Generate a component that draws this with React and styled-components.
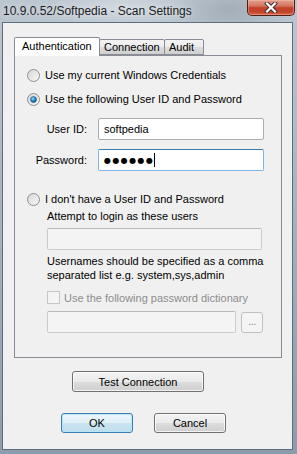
import React from "react";
import styled, { createGlobalStyle } from "styled-components";

const Global = createGlobalStyle`
  html, body { margin: 0; padding: 0; }
  body { width: 297px; height: 454px; overflow: hidden; font-family: "Liberation Sans", Arial, sans-serif; }
  * { box-sizing: border-box; }
`;

const Window = styled.div`
  width: 297px;
  height: 454px;
  display: flex;
  flex-direction: column;
  background:
    radial-gradient(ellipse 60px 30px at 230px 10px, rgba(120,130,140,0.35), transparent),
    radial-gradient(ellipse 80px 20px at 120px 8px, rgba(230,235,240,0.5), transparent),
    linear-gradient(180deg, #bcc6cf 0%, #a9b6c1 40%, #8d9caa 100%);
`;

const TitleBar = styled.div`
  height: 22px;
  flex: none;
  display: flex;
  justify-content: space-between;
  align-items: flex-start;
`;

const Title = styled.div`
  padding: 4px 0 0 3px;
  font-family: "Liberation Sans", Arial, sans-serif;
  font-size: 12px;
  color: #1b1b22;
  text-shadow: 0 0 6px rgba(255,255,255,0.8);
  white-space: nowrap;
`;

const CloseBtn = styled.div`
  width: 48px;
  height: 16px;
  margin-right: 2px;
  border: 1px solid #4e1f18;
  border-top: none;
  border-radius: 0 0 5px 5px;
  background: linear-gradient(180deg, #e2a08f 0%, #d47560 40%, #c1402a 52%, #c44529 80%, #d8694a 100%);
  box-shadow: inset 0 0 0 1px rgba(255,200,185,0.4);
  display: flex;
  align-items: center;
  justify-content: center;
`;

const Client = styled.div`
  flex: 1;
  margin: 0 4px 4px 2px;
  border: 1px solid #5f6d7a;
  background: #f0f0f0;
  display: flex;
  flex-direction: column;
  padding: 13px 10px 0 11px;
`;

const TabStrip = styled.div`
  display: flex;
  align-items: flex-end;
  height: 19px;
  position: relative;
  z-index: 1;
`;

const Tab = styled.div`
  height: ${p => (p.$active ? "19px" : "16px")};
  width: ${p => p.$w}px;
  margin-left: ${p => (p.$first ? 0 : -1)}px;
  margin-bottom: ${p => (p.$active ? "-1px" : "0")};
  border: 1px solid #898c95;
  border-bottom: ${p => (p.$active ? "none" : "1px solid #898c95")};
  border-radius: 2px 2px 0 0;
  background: ${p => (p.$active ? "#ffffff" : "linear-gradient(180deg, #f3f3f3 0%, #ebebeb 50%, #dddddd 51%, #cfcfcf 100%)")};
  font-size: 11px;
  line-height: 13px;
  color: #000;
  padding: ${p => (p.$active ? "2px 0 0 7px" : "1px 0 0 4px")};
  white-space: nowrap;
  position: relative;
  z-index: ${p => (p.$active ? 2 : 1)};
`;

const Panel = styled.div`
  width: 268px;
  height: 303px;
  border: 1px solid #898c95;
  background: #f0f0f0;
  padding: 11px 0 0 12px;
  display: flex;
  flex-direction: column;
`;

const RadioRow = styled.label`
  display: flex;
  align-items: center;
  gap: 5px;
  height: 16px;
  margin-top: ${p => p.$mt || 0}px;
  font-size: 11px;
  color: #000;
  white-space: nowrap;
`;

const FormGrid = styled.div`
  display: grid;
  grid-template-columns: 60px 166px;
  column-gap: 11px;
  row-gap: 9px;
  align-items: center;
  margin-top: 11px;
`;

const FieldLabel = styled.span`
  font-size: 11px;
  text-align: right;
  color: #000;
`;

const TextBox = styled.div`
  height: 22px;
  width: ${p => p.$w ? `${p.$w}px` : "auto"};
  border: 1px solid ${p => p.$focus ? "#7eb4ea" : p.$disabled ? "#c9cbcf" : "#abadb3"};
  border-top-color: ${p => p.$focus ? "#3d7bad" : p.$disabled ? "#b8babe" : "#abadb3"};
  border-radius: 2px;
  background: ${p => p.$disabled ? "#f4f4f4" : "#ffffff"};
  display: flex;
  align-items: center;
  padding-left: 5px;
  font-size: 11px;
  color: #000;
`;

const Dots = styled.span`
  font-family: "DejaVu Sans", sans-serif;
  font-size: 8px;
  letter-spacing: 1.4px;
  font-weight: bold;
`;

const Caret = styled.span`
  display: inline-block;
  width: 1px;
  height: 14px;
  background: #000;
  margin-left: -0.5px;
`;

const Indented = styled.div`
  display: flex;
  flex-direction: column;
  padding-left: 20px;
`;

const Text = styled.div`
  font-size: 11px;
  line-height: 14px;
  color: ${p => p.$muted ? "#8d8d8d" : "#000"};
  margin-top: ${p => p.$mt || 0}px;
  white-space: nowrap;
`;

const CheckRow = styled.div`
  display: flex;
  align-items: center;
  gap: 4px;
  height: 13px;
  margin-top: 9px;
  font-size: 11px;
  color: #8d8d8d;
  white-space: nowrap;
`;

const CheckBox = styled.span`
  width: 13px;
  height: 13px;
  border: 1px solid #c6c6c6;
  background: linear-gradient(135deg, #f0f0f0, #f8f8f8);
  box-shadow: inset 0 0 0 1px #f4f4f4;
`;

const InputRow = styled.div`
  display: flex;
  align-items: center;
  gap: 5px;
  margin-top: 7px;
`;

const SmallBtn = styled.div`
  width: 22px;
  height: 21px;
  border: 1px solid #c0c0c0;
  border-radius: 3px;
  background: #f4f4f4;
  color: #8d8d8d;
  font-size: 11px;
  display: flex;
  align-items: flex-end;
  justify-content: center;
  padding-bottom: 5px;
  letter-spacing: -0.5px;
`;

const ButtonRow = styled.div`
  display: flex;
  gap: ${p => p.$gap || 0}px;
  padding-left: ${p => p.$pl}px;
  margin-top: ${p => p.$mt}px;
`;

const Button = styled.div`
  width: ${p => p.$w}px;
  height: ${p => p.$h || 21}px;
  border: 1px solid ${p => p.$def ? "#3c7fb1" : "#707070"};
  border-radius: 3px;
  background: ${p => p.$def
    ? "linear-gradient(180deg, #eef6fb 0%, #dfeef7 50%, #cae3f1 51%, #c0ddec 100%)"
    : "linear-gradient(180deg, #f2f2f2 0%, #ebebeb 50%, #dddddd 51%, #cfcfcf 100%)"};
  box-shadow: inset 0 0 0 1px ${p => p.$def ? "rgba(180,230,250,0.9)" : "rgba(255,255,255,0.75)"};
  font-size: 11px;
  color: #000;
  display: flex;
  align-items: center;
  justify-content: center;
`;

const Radio = ({ checked }) => (
  <svg width="13" height="13" viewBox="0 0 13 13">
    <defs>
      <linearGradient id="rb" x1="0" y1="0" x2="1" y2="1">
        <stop offset="0" stopColor="#d7d7d7" />
        <stop offset="1" stopColor="#f8f8f8" />
      </linearGradient>
      <radialGradient id="rd" cx="0.4" cy="0.35" r="0.7">
        <stop offset="0" stopColor="#9bdcfb" />
        <stop offset="0.5" stopColor="#2f8fcf" />
        <stop offset="1" stopColor="#0d3c63" />
      </radialGradient>
    </defs>
    <circle cx="6.5" cy="6.5" r="6" fill="url(#rb)" stroke="#8e8f8f" strokeWidth="1" />
    {checked && <circle cx="6.5" cy="6.5" r="3" fill="url(#rd)" stroke="#26547a" strokeWidth="0.6" />}
  </svg>
);

export default function App() {
  return (
    <>
      <Global />
      <Window>
        <TitleBar>
          <Title>10.9.0.52/Softpedia - Scan Settings</Title>
          <CloseBtn>
            <svg width="14" height="11" viewBox="0 0 14 11">
              <path d="M3 1.5 L11 9.5 M11 1.5 L3 9.5" stroke="#3a2a2a" strokeWidth="4" strokeLinecap="square" />
              <path d="M3 1.5 L11 9.5 M11 1.5 L3 9.5" stroke="#ffffff" strokeWidth="2.2" strokeLinecap="square" />
            </svg>
          </CloseBtn>
        </TitleBar>
        <Client>
          <TabStrip>
            <Tab $active $first $w={86}>Authentication</Tab>
            <Tab $w={66}>Connection</Tab>
            <Tab $w={40}>Audit</Tab>
          </TabStrip>
          <Panel>
            <RadioRow><Radio />Use my current Windows Credentials</RadioRow>
            <RadioRow $mt={8}><Radio checked />Use the following User ID and Password</RadioRow>
            <FormGrid>
              <FieldLabel>User ID:</FieldLabel>
              <TextBox>softpedia</TextBox>
              <FieldLabel>Password:</FieldLabel>
              <TextBox $focus><Dots>●●●●●●</Dots><Caret /></TextBox>
            </FormGrid>
            <RadioRow $mt={20}><Radio />I don't have a User ID and Password</RadioRow>
            <Indented>
              <Text $mt={2}>Attempt to login as these users</Text>
              <TextBox $disabled $w={215} style={{ marginTop: 5 }} />
              <Text $mt={4}>Usernames should be specified as a comma<br />separated list e.g. system,sys,admin</Text>
              <CheckRow><CheckBox />Use the following password dictionary</CheckRow>
              <InputRow>
                <TextBox $disabled $w={189} />
                <SmallBtn>...</SmallBtn>
              </InputRow>
            </Indented>
          </Panel>
          <ButtonRow $pl={58} $mt={13}>
            <Button $w={132}>Test Connection</Button>
          </ButtonRow>
          <ButtonRow $pl={47} $mt={21} $gap={21}>
            <Button $def $w={72} $h={20}>OK</Button>
            <Button $w={72} $h={20}>Cancel</Button>
          </ButtonRow>
        </Client>
      </Window>
    </>
  );
}
